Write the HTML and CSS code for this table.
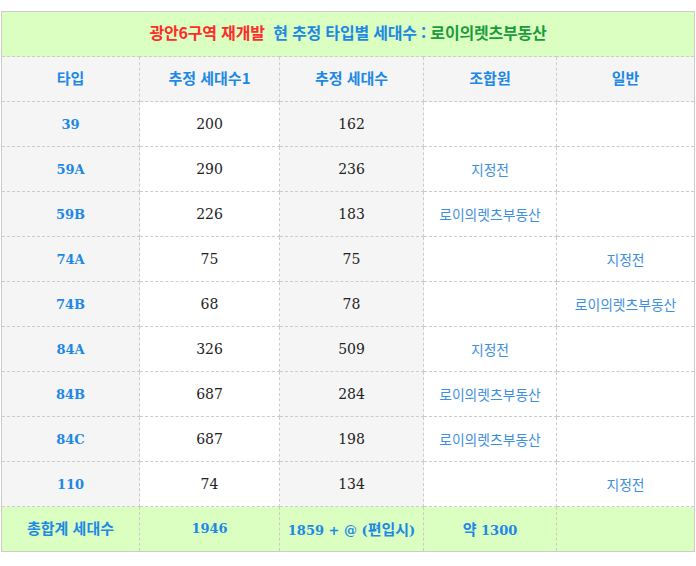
FILE: index.html
```html
<!DOCTYPE html>
<html lang="ko">
<head>
<meta charset="utf-8">
<title>광안6구역 재개발</title>
<link rel="stylesheet" href="styles.css">
</head>
<body>
<table class="units">
  <colgroup>
    <col class="c1"><col class="c2"><col class="c3"><col class="c4"><col class="c5">
  </colgroup>
  <thead>
    <tr class="title-row">
      <th colspan="5"><span class="red">광안6구역 재개발</span>&nbsp; <span class="blue">현 추정 타입별 세대수 :</span> <span class="green">로이의렛츠부동산</span></th>
    </tr>
    <tr class="head-row">
      <th>타입</th><th>추정 세대수1</th><th>추정 세대수</th><th>조합원</th><th>일반</th>
    </tr>
  </thead>
  <tbody>
    <tr><td class="type">39</td><td class="num">200</td><td class="num grey">162</td><td></td><td></td></tr>
    <tr><td class="type">59A</td><td class="num">290</td><td class="num grey">236</td><td class="note">지정전</td><td></td></tr>
    <tr><td class="type">59B</td><td class="num">226</td><td class="num grey">183</td><td class="note">로이의렛츠부동산</td><td></td></tr>
    <tr><td class="type">74A</td><td class="num">75</td><td class="num grey">75</td><td></td><td class="note">지정전</td></tr>
    <tr><td class="type">74B</td><td class="num">68</td><td class="num grey">78</td><td></td><td class="note">로이의렛츠부동산</td></tr>
    <tr><td class="type">84A</td><td class="num">326</td><td class="num grey">509</td><td class="note">지정전</td><td></td></tr>
    <tr><td class="type">84B</td><td class="num">687</td><td class="num grey">284</td><td class="note">로이의렛츠부동산</td><td></td></tr>
    <tr><td class="type">84C</td><td class="num">687</td><td class="num grey">198</td><td class="note">로이의렛츠부동산</td><td></td></tr>
    <tr><td class="type">110</td><td class="num">74</td><td class="num grey">134</td><td></td><td class="note">지정전</td></tr>
  </tbody>
  <tfoot>
    <tr class="total-row">
      <td class="total-label">총합계 세대수</td>
      <td>1946</td>
      <td>1859 + @ (<span class="ko">편입시</span>)</td>
      <td><span class="ko">약</span> 1300</td>
      <td></td>
    </tr>
  </tfoot>
</table>
</body>
</html>
```

FILE: styles.css
```css
html, body {
  margin: 0;
  padding: 0;
  background: #ffffff;
}

body {
  padding: 11px 0 0 1px;
  font-family: "DejaVu Serif", "Noto Sans CJK KR", serif;
}

.units {
  width: 693px;
  border-collapse: collapse;
  table-layout: fixed;
  border: 1px solid #cccccc;
}

.c1 { width: 138px; }
.c2 { width: 140px; }
.c3 { width: 144px; }
.c4 { width: 133px; }
.c5 { width: 138px; }

.units tr {
  height: 45px;
}

.units th,
.units td {
  padding: 0;
  border: 1px dashed #cccccc;
  text-align: center;
  vertical-align: middle;
}

.title-row th {
  background: #daffc1;
  font-family: "Noto Sans CJK KR", sans-serif;
  font-size: 16px;
  font-weight: 700;
  letter-spacing: -0.2px;
  padding-bottom: 4px;
}

.red { color: #ff2b2b; }
.blue { color: #1e88e5; }
.green { color: #1b9b3b; }

.head-row th {
  background: #f5f5f5;
  color: #1e88e5;
  font-family: "Noto Sans CJK KR", sans-serif;
  font-size: 15px;
  font-weight: 700;
  padding-bottom: 4px;
}

.type {
  background: #f5f5f5;
  color: #1e88e5;
  font-size: 13px;
  font-weight: 700;
}

.num {
  color: #222222;
  font-size: 14px;
}

.grey {
  background: #f5f5f5;
}

.note {
  color: #3d8fe0;
  font-family: "Noto Sans CJK KR", sans-serif;
  font-size: 13.8px;
  padding-bottom: 5px;
}

.total-row td {
  background: #daffc1;
  color: #1e88e5;
  font-size: 13px;
  font-weight: 700;
  padding-bottom: 2px;
}

.total-row .total-label,
.total-row .ko {
  font-family: "Noto Sans CJK KR", sans-serif;
  font-size: 15px;
}

.total-row .total-label {
  padding-bottom: 4px;
}
```
